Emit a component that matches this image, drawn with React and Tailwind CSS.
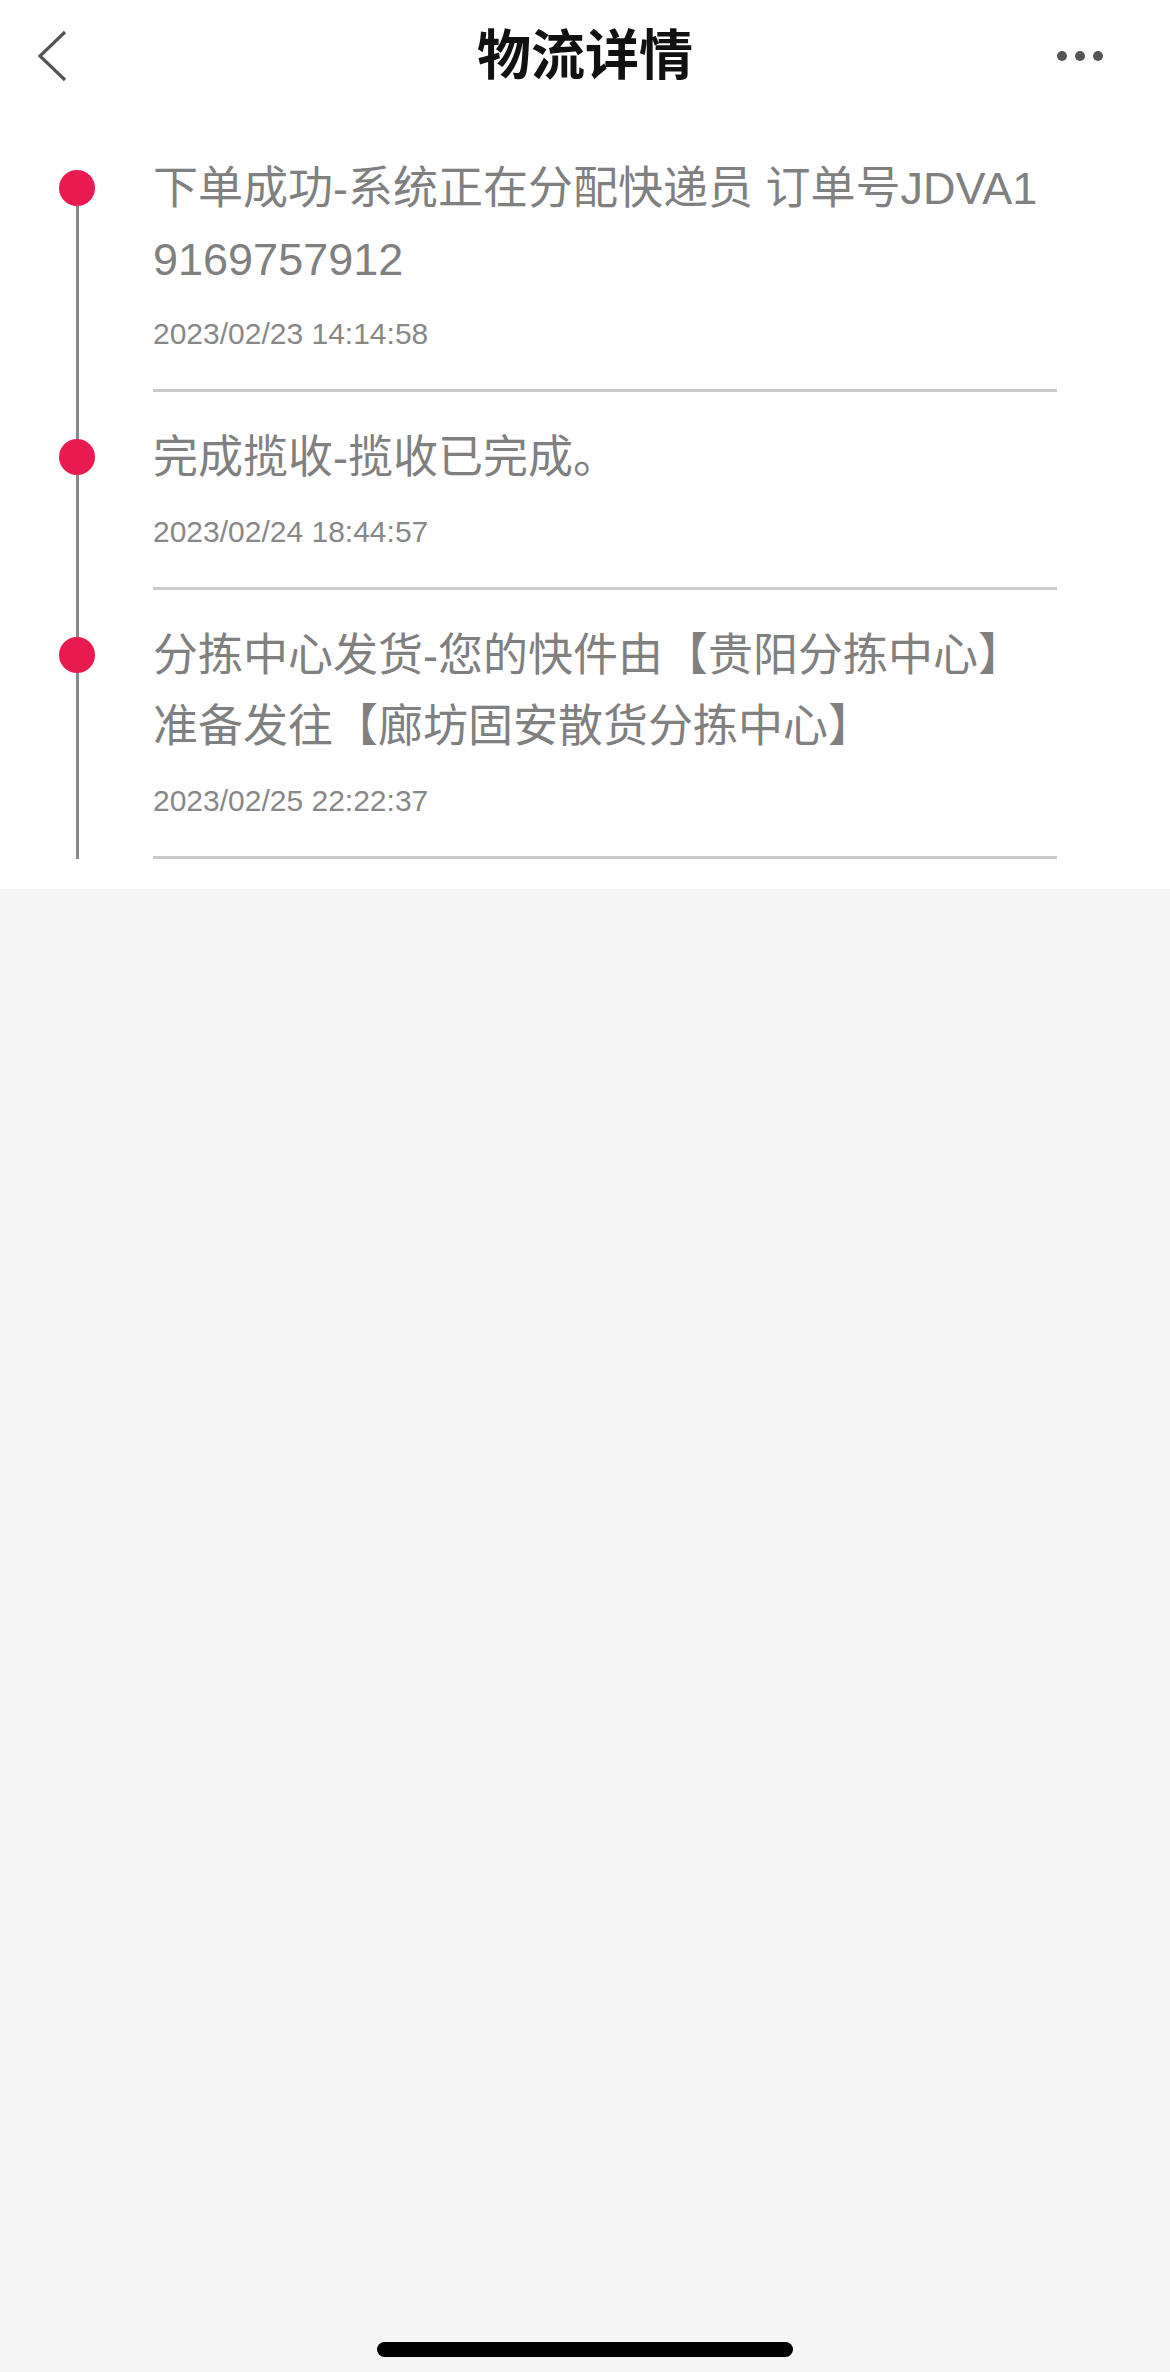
const steps = [
  {
    lines: ['下单成功-系统正在分配快递员 订单号JDVA1', '9169757912'],
    time: '2023/02/23 14:14:58',
  },
  {
    lines: ['完成揽收-揽收已完成。'],
    time: '2023/02/24 18:44:57',
  },
  {
    lines: ['分拣中心发货-您的快件由【贵阳分拣中心】', '准备发往【廊坊固安散货分拣中心】'],
    time: '2023/02/25 22:22:37',
  },
]

const font = { fontFamily: '"Liberation Sans", "Noto Sans CJK SC", sans-serif' }

function Step({ step, first }) {
  return (
    <div className="flex">
      {/* timeline gutter */}
      <div className="w-[153px] shrink-0 flex">
        <div className="ml-[59px] w-[36px] flex flex-col items-center">
          <div className={`h-[47px] w-[3px] ${first ? 'bg-transparent' : 'bg-[#888888]'}`} />
          <div className="w-[36px] h-[36px] rounded-full bg-[#e91a50]" />
          <div className="flex-1 w-[3px] bg-[#888888]" />
        </div>
      </div>

      <div className="w-[904px] pt-[30px] border-b-[3px] border-[#cccccc]">
        <p className="text-[45px] leading-[71px] text-[#808080] whitespace-nowrap">
          {step.lines.map((l) => (
            <span key={l} className="block">{l}</span>
          ))}
        </p>
        <p className="mt-[19px] pb-[35px] text-[30px] leading-[40px] text-[#888888]">{step.time}</p>
      </div>
    </div>
  )
}

export default function App() {
  return (
    <div className="w-[1170px] min-h-[2372px] bg-[#f5f5f5] flex flex-col" style={font}>
      <div className="bg-white pb-[30px]">
        {/* header */}
        <div className="h-[112px] grid grid-cols-[1fr_auto_1fr] items-center px-[36px]">
          <svg width="34" height="54" viewBox="0 0 34 54" fill="none">
            <path d="M29 3 L4 27 L29 51" stroke="#555555" strokeWidth="3.2" />
          </svg>
          <h1 className="text-[54px] font-bold text-[#111111] leading-none">物流详情</h1>
          <div className="flex gap-[8px] mr-[31px] justify-end">
            <span className="w-[10px] h-[10px] rounded-full bg-[#555555]" />
            <span className="w-[10px] h-[10px] rounded-full bg-[#555555]" />
            <span className="w-[10px] h-[10px] rounded-full bg-[#555555]" />
          </div>
        </div>

        <div className="pt-[11px]">
          {steps.map((s, i) => (
            <Step key={s.time} step={s} first={i === 0} />
          ))}
        </div>
      </div>

      <div className="flex-1" />
      <div className="flex justify-center pb-[15px]">
        <div className="w-[416px] h-[15px] rounded-full bg-black" />
      </div>
    </div>
  )
}
